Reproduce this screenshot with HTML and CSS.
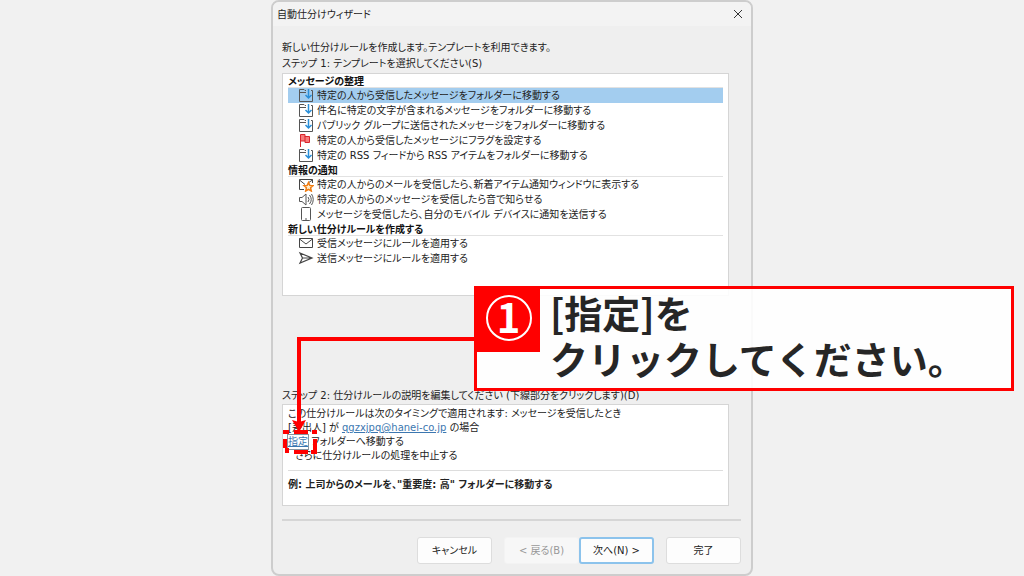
FILE: index.html
```html
<!DOCTYPE html>
<html lang="ja">
<head>
<meta charset="utf-8">
<title>自動仕分けウィザード</title>
<link rel="stylesheet" href="styles.css">
</head>
<body>
<svg class="defs" aria-hidden="true">
  <symbol id="folder" viewBox="0 0 16 15">
    <path d="M8 2.500H7L6 1.500H1.500v12h13v-11H13M2 4.500h6" fill="none" stroke="#555"/>
    <path d="M10.500 1v9M7.500 7l3 3 3-3" fill="none" stroke="#2a8fd8" stroke-width="1.500"/>
  </symbol>
</svg>
<main class="dialog">
  <header class="titlebar">
    <h1 class="title">自動仕分けウィザード</h1>
    <button class="close" aria-label="閉じる"><svg viewBox="0 0 10 10" width="10" height="10"><path d="M1 1l8 8M9 1L1 9" stroke="#333" fill="none"/></svg></button>
  </header>
  <div class="content">
    <p class="label">新しい仕分けルールを作成します。テンプレートを利用できます。</p>
    <p class="label">ステップ 1: テンプレートを選択してください(S)</p>
    <section class="box templates">
      <h2 class="group">メッセージの整理</h2>
      <ul class="items">
        <li class="item selected"><svg class="icon"><use href="#folder"/></svg>特定の人から受信したメッセージをフォルダーに移動する</li>
        <li class="item"><svg class="icon"><use href="#folder"/></svg>件名に特定の文字が含まれるメッセージをフォルダーに移動する</li>
        <li class="item"><svg class="icon"><use href="#folder"/></svg>パブリック グループに送信されたメッセージをフォルダーに移動する</li>
        <li class="item"><svg class="icon" viewBox="0 0 16 15"><path d="M2.500 14V1.500H7V3.500h4.500v6H7V8H3" fill="#f77b7b" stroke="#d9252c"/><path d="M7 3v5" stroke="#d9252c"/></svg>特定の人から受信したメッセージにフラグを設定する</li>
        <li class="item"><svg class="icon"><use href="#folder"/></svg>特定の RSS フィードから RSS アイテムをフォルダーに移動する</li>
      </ul>
      <h2 class="group">情報の通知</h2>
      <ul class="items">
        <li class="item"><svg class="icon" viewBox="0 0 16 15"><path d="M6 12.500H1.500v-10h13V6M1.500 3L7 7.500M14.500 3L10 6" fill="none" stroke="#444"/><path d="M10.500 5.500l1.300 2.900 3.200.3-2.400 2.100.7 3.200-2.800-1.700L7.700 14l.7-3.200L6 8.700l3.200-.3z" fill="#fff0d0" stroke="#f07c12" stroke-width="1.500"/></svg>特定の人からのメールを受信したら、新着アイテム通知ウィンドウに表示する</li>
        <li class="item"><svg class="icon" viewBox="0 0 16 15"><path d="M1.500 5.500H4l4-3.500v11L4 9.500H1.500zM10 5q2 2.500 0 5M11.500 3q3.500 4.500 0 9M13.500 2q3.500 5.500 0 11" fill="none" stroke="#555"/></svg>特定の人からのメッセージを受信したら音で知らせる</li>
        <li class="item"><svg class="icon" viewBox="0 0 16 15"><rect x="3.500" y=".5" width="9" height="13" rx="1" fill="none" stroke="#555"/><path d="M7 12h2" stroke="#555"/></svg>メッセージを受信したら、自分のモバイル デバイスに通知を送信する</li>
      </ul>
      <h2 class="group">新しい仕分けルールを作成する</h2>
      <ul class="items">
        <li class="item"><svg class="icon" viewBox="0 0 16 15"><path d="M1.500 2.500h13v9h-13zM1.500 3L8 8l6.500-5" fill="none" stroke="#444"/></svg>受信メッセージにルールを適用する</li>
        <li class="item"><svg class="icon" viewBox="0 0 16 15"><path d="M2 2l12 5L2 12l2.500-5zM4.500 7H14" fill="none" stroke="#444" stroke-width="1.200"/></svg>送信メッセージにルールを適用する</li>
      </ul>
    </section>
    <p class="label">ステップ 2: 仕分けルールの説明を編集してください (下線部分をクリックします)(D)</p>
    <section class="box rule">
      <p>この仕分けルールは次のタイミングで適用されます: メッセージを受信したとき</p>
      <p>[差出人] が <a class="link" href="#mail">qgzxjpq@hanei-co.jp</a> の場合</p>
      <p><a class="link target" href="#folder-name">指定<svg class="marker" viewBox="0 0 34 24" aria-hidden="true"><path d="M0 2h6M11 2h14M29 2h5M2 0v4M2 9v9M4 18v5M11 22h14M32 9v15M28 22h4" fill="none" stroke="red" stroke-width="4"/></svg></a> フォルダーへ移動する</p>
      <p class="indent">さらに仕分けルールの処理を中止する</p>
      <p class="example">例: 上司からのメールを、"重要度: 高" フォルダーに移動する</p>
    </section>
    <footer class="actions">
      <button class="button">キャンセル</button>
      <div class="pair">
        <button class="button" disabled>&lt; 戻る(B)</button>
        <button class="button primary">次へ(N) &gt;</button>
      </div>
      <button class="button">完了</button>
    </footer>
  </div>
</main>
<svg class="arrow" viewBox="0 0 184 96" aria-hidden="true"><path d="M184 3H8v84" fill="none" stroke="red" stroke-width="4"/><path d="M1 84l7 2 7-2-7 12z" fill="red"/></svg>
<aside class="callout">
  <div class="badge"><span class="number">1</span></div>
  <p class="message">[指定]を<br>クリックしてください。</p>
</aside>
</body>
</html>
```
FILE: styles.css
```css
* { box-sizing: border-box; }
body {
  position: relative;
  margin: 0;
  min-height: 576px;
  background: #f1f1f1;
  color: #222;
  font: 10px/15px "DejaVu Sans", "Noto Sans CJK JP", sans-serif;
  font-feature-settings: "palt";
}
h1, h2, p, ul { margin: 0; padding: 0; }
.defs { position: absolute; width: 0; height: 0; }
.dialog {
  width: 47%;
  min-width: 482px;
  margin: 0 auto;
  background: #efefef;
  border: 2px solid #cdcdcd;
  border-radius: 8px;
}
.titlebar {
  display: flex;
  align-items: center;
  justify-content: space-between;
  height: 24px;
  padding: 0 8px 0 4px;
  background: #f3f3f3;
  border-radius: 6px 6px 0 0;
}
.title { font-size: 10px; font-weight: 400; }
.close { display: flex; padding: 0; border: 0; background: none; }
.content { padding: 14px 10px 10px 9px; }
.label { height: 16px; white-space: nowrap; }
.box {
  margin-right: 12px;
  padding: 0 5px;
  background: #fff;
  border: 1px solid #d5d5d5;
}
.templates { height: 223px; margin: 1px 12px 92px 0; }
.group {
  height: 14px;
  font-size: 10px;
  line-height: 15px;
  color: #111;
  border-bottom: 1px solid #e2e2e2;
}
.items { list-style: none; }
.item {
  display: flex;
  align-items: center;
  gap: 3px;
  height: 15px;
  padding-left: 10px;
  white-space: nowrap;
}
.selected { background: #a3cdef; }
.icon { width: 16px; height: 15px; flex: none; }
.rule { height: 102px; padding-top: 2px; line-height: 14px; white-space: nowrap; }
.link { color: #3c77b0; }
.target { position: relative; display: inline-block; outline: 1px solid #8794a0; }
.marker {
  position: absolute;
  left: -5px;
  top: -5px;
  width: 34px;
  height: 24px;
}
.indent { padding-left: 7px; }
.example {
  margin-top: 7px;
  padding-top: 7px;
  border-top: 1px solid #ddd;
  font-weight: 700;
}
.actions {
  display: flex;
  justify-content: flex-end;
  gap: 12px;
  margin-top: 13px;
  padding-top: 16px;
  border-top: 2px solid #d6d6d6;
}
.pair { display: flex; }
.button {
  width: 75px;
  height: 27px;
  padding: 0;
  font: inherit;
  color: #222;
  background: #fdfdfd;
  border: 1px solid #ddd;
  border-radius: 3px;
}
.button:disabled { color: #999; background: #f7f7f7; border-color: #f3f3f3; }
.button.primary { border: 2px solid #8cc3ec; }
.arrow { position: absolute; left: 291px; top: 336px; width: 184px; height: 96px; }
.callout {
  position: absolute;
  left: 474px;
  top: 286px;
  right: 10px;
  display: flex;
  align-items: flex-start;
  gap: 10px;
  border: 3px solid red;
  background: rgba(255, 255, 255, .9);
}
.badge {
  display: grid;
  place-items: center;
  width: 63px;
  height: 63px;
  padding-bottom: 6px;
  background: red;
}
.number {
  width: 46px;
  height: 46px;
  border: 2px solid #fff;
  border-radius: 50%;
  color: #fff;
  font-family: "Noto Sans CJK JP", sans-serif;
  font-size: 40px;
  font-weight: 700;
  line-height: 38px;
  text-align: center;
}
.message {
  height: 99px;
  color: #262626;
  font-family: "Noto Sans CJK JP", sans-serif;
  font-size: 38px;
  font-weight: 700;
  line-height: 46px;
  font-feature-settings: normal;
  white-space: nowrap;
}
```
